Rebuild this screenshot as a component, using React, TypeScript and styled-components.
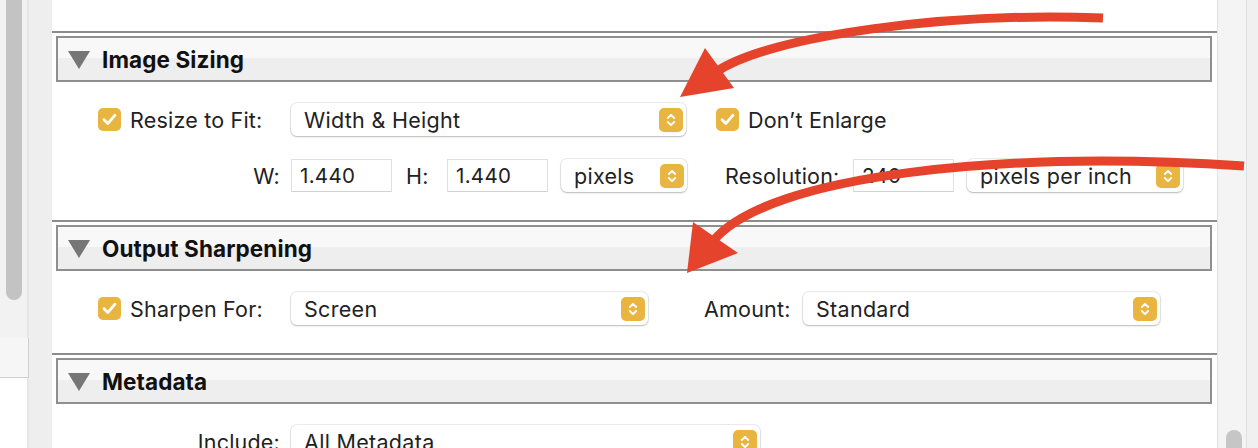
import styled, { createGlobalStyle } from "styled-components";

const GlobalStyle = createGlobalStyle`
  html, body {
    margin: 0;
    padding: 0;
    overflow: hidden;
    background: #ffffff;
  }
  body {
    font-family: Inter, "Noto Sans", "Liberation Sans", sans-serif;
    color: #222222;
    -webkit-font-smoothing: antialiased;
  }
`;

const ACCENT = "#e8b540";

const Window = styled.div`
  position: relative;
  display: flex;
  width: 1258px;
  height: 448px;
  overflow: hidden;
`;

const LeftRail = styled.div`
  display: flex;
  width: 52px;
  flex-shrink: 0;
`;

const RailTrack = styled.div`
  width: 27px;
  display: flex;
  flex-direction: column;
  background: #f2f2f2;
  border-right: 2px solid #e6e6e6;
`;

const RailThumb = styled.div`
  margin: 0 5px 0 6px;
  height: 300px;
  background: #c3c3c3;
  border-radius: 0 0 8px 8px;
`;

const RailSpacer = styled.div`
  height: 38px;
`;

const RailBox = styled.div`
  height: 39px;
  background: #f6f6f6;
  border-bottom: 1px solid #cfcfcf;
  margin-right: -2px;
  border-right: 1px solid #cfcfcf;
`;

const RailRest = styled.div`
  flex: 1;
  background: #ffffff;
`;

const RailGutter = styled.div`
  flex: 1;
  background: #eeeeee;
`;

const Panel = styled.div`
  flex: 1;
  display: flex;
  flex-direction: column;
  background: #ffffff;
  border-right: 1px solid #e2e2e2;
  overflow: hidden;
`;

const RightRail = styled.div`
  display: flex;
  width: 40px;
  flex-shrink: 0;
`;

const RightTrack = styled.div`
  width: 28px;
  display: flex;
  flex-direction: column;
  justify-content: flex-end;
  background: #f4f4f4;
  border-right: 1px solid #e2e2e2;
`;

const RightThumb = styled.div`
  margin: 0 4px 0 8px;
  height: 18px;
  background: #c6c6c6;
  border-radius: 8px 8px 0 0;
`;

const RightGutter = styled.div`
  flex: 1;
  background: #f0f0f0;
`;

const Separator = styled.div`
  height: 2px;
  background: #8c8c8c;
  flex-shrink: 0;
`;

const HeaderBox = styled.div`
  box-sizing: border-box;
  height: 46px;
  margin: 3px 5px 0 4px;
  border: 2px solid #8f8f8f;
  background: linear-gradient(#f8f8f8 0 48%, #eeeeee 48% 100%);
  display: flex;
  align-items: center;
  padding-left: 10px;
  flex-shrink: 0;
`;

const Disclosure = styled.span`
  width: 0;
  height: 0;
  border-left: 11px solid transparent;
  border-right: 11px solid transparent;
  border-top: 18px solid #767676;
  margin-top: 1px;
`;

const HeaderTitle = styled.span`
  margin-left: 12px;
  font-size: 22.5px;
  font-weight: 700;
  color: #111111;
  letter-spacing: 0.1px;
`;

const Body = styled.div<{ $lead?: boolean }>`
  display: flex;
  flex-direction: column;
  gap: 23px;
  padding: ${(p) => (p.$lead ? "0" : "21px")} 0 28px;
  margin-top: ${(p) => (p.$lead ? "-30px" : "0")};
  flex-shrink: 0;
`;

const Row = styled.div`
  display: flex;
  align-items: center;
  height: 33px;
`;

const LabelCell = styled.div<{ $check?: boolean }>`
  box-sizing: border-box;
  width: 239px;
  flex-shrink: 0;
  display: flex;
  align-items: center;
  justify-content: ${(p) => (p.$check ? "flex-start" : "flex-end")};
  padding: ${(p) => (p.$check ? "0 0 0 46px" : "0 11px 0 0")};
`;

const Label = styled.span`
  font-size: 21.5px;
  color: #222222;
  white-space: nowrap;
  letter-spacing: 0.2px;
`;

const InlineLabel = styled(Label)<{ $w: number; $ml: number }>`
  width: ${(p) => p.$w}px;
  margin-left: ${(p) => p.$ml}px;
  flex-shrink: 0;
`;

const CheckGroup = styled.div<{ $ml?: number }>`
  display: flex;
  align-items: center;
  gap: 9px;
  margin-left: ${(p) => p.$ml ?? 0}px;
`;

const Box = styled.span<{ $on: boolean }>`
  box-sizing: border-box;
  width: 23px;
  height: 23px;
  border-radius: 5px;
  display: inline-flex;
  align-items: center;
  justify-content: center;
  flex-shrink: 0;
  background: ${(p) => (p.$on ? ACCENT : "#ffffff")};
  border: ${(p) => (p.$on ? "none" : "1px solid #d6d6d6")};
`;

const Popup = styled.div<{ $w: number; $ml?: number }>`
  box-sizing: border-box;
  width: ${(p) => p.$w}px;
  margin-left: ${(p) => p.$ml ?? 0}px;
  height: 33px;
  flex-shrink: 0;
  display: flex;
  align-items: center;
  justify-content: space-between;
  padding: 0 3px 0 13px;
  background: #ffffff;
  border-radius: 6px;
  box-shadow: 0 0 0 1px rgba(0, 0, 0, 0.07), 0 1px 2px rgba(0, 0, 0, 0.22);
`;

const PopupText = styled.span`
  font-size: 21.5px;
  color: #222222;
  white-space: nowrap;
  letter-spacing: 0.3px;
`;

const Field = styled.div<{ $w: number; $ml?: number }>`
  box-sizing: border-box;
  width: ${(p) => p.$w}px;
  margin-left: ${(p) => p.$ml ?? 0}px;
  height: 33px;
  flex-shrink: 0;
  display: flex;
  align-items: center;
  padding-left: 8px;
  background: #ffffff;
  border: 1px solid #e0e0e0;
  border-bottom-color: #d2d2d2;
  font-size: 20.5px;
  color: #222222;
  letter-spacing: 0.3px;
`;

const Overlay = styled.svg`
  position: absolute;
  inset: 0;
  pointer-events: none;
`;

const Check = ({ on = true }: { on?: boolean }) => (
  <Box $on={on}>
    {on && (
      <svg width="23" height="23" viewBox="0 0 23 23">
        <path
          d="M6 11.8 L9.8 15.6 L17 7.2"
          fill="none"
          stroke="#ffffff"
          strokeWidth="2.8"
          strokeLinecap="round"
          strokeLinejoin="round"
        />
      </svg>
    )}
  </Box>
);

const Stepper = () => (
  <svg width="24" height="24" viewBox="0 0 24 24">
    <rect width="24" height="24" rx="5" fill={ACCENT} />
    <path
      d="M8.8 10 L12 6.8 L15.2 10 M8.8 14 L12 17.2 L15.2 14"
      fill="none"
      stroke="#ffffff"
      strokeWidth="1.9"
      strokeLinecap="round"
      strokeLinejoin="round"
    />
  </svg>
);

const Select = ({ value, w, ml }: { value: string; w: number; ml?: number }) => (
  <Popup $w={w} $ml={ml}>
    <PopupText>{value}</PopupText>
    <Stepper />
  </Popup>
);

const Section = ({ title, children }: { title: string; children: React.ReactNode }) => (
  <>
    <Separator />
    <HeaderBox>
      <Disclosure />
      <HeaderTitle>{title}</HeaderTitle>
    </HeaderBox>
    <Body>{children}</Body>
  </>
);

const RED = "#e5432b";

const Arrows = () => (
  <Overlay width="1258" height="448" viewBox="0 0 1258 448">
    <path
      d="M1103 18 C 950 12, 770 35, 716 72"
      fill="none"
      stroke={RED}
      strokeWidth="9"
    />
    <polygon points="680,97 705,48 734,88" fill={RED} />
    <path
      d="M1244 166 C 1000 150, 770 175, 714 240"
      fill="none"
      stroke={RED}
      strokeWidth="9"
    />
    <polygon points="687,273 693,222 738,253" fill={RED} />
  </Overlay>
);

export default function App() {
  return (
    <>
      <GlobalStyle />
      <Window>
        <LeftRail>
          <RailTrack>
            <RailThumb />
            <RailSpacer />
            <RailBox />
            <RailRest />
          </RailTrack>
          <RailGutter />
        </LeftRail>

        <Panel>
          <Body $lead>
            <Row>
              <LabelCell $check>
                <CheckGroup>
                  <Check on={false} />
                  <Label>Maximize Compatibility</Label>
                </CheckGroup>
              </LabelCell>
            </Row>
          </Body>

          <Section title="Image Sizing">
            <Row>
              <LabelCell $check>
                <CheckGroup>
                  <Check />
                  <Label>Resize to Fit:</Label>
                </CheckGroup>
              </LabelCell>
              <Select value="Width & Height" w={395} />
              <CheckGroup $ml={30}>
                <Check />
                <Label>Don’t Enlarge</Label>
              </CheckGroup>
            </Row>
            <Row>
              <LabelCell>
                <Label>W:</Label>
              </LabelCell>
              <Field $w={101}>1.440</Field>
              <InlineLabel $w={41} $ml={14}>
                H:
              </InlineLabel>
              <Field $w={101}>1.440</Field>
              <Select value="pixels" w={126} ml={13} />
              <InlineLabel $w={128} $ml={38}>
                Resolution:
              </InlineLabel>
              <Field $w={101}>240</Field>
              <Select value="pixels per inch" w={216} ml={13} />
            </Row>
          </Section>

          <Section title="Output Sharpening">
            <Row>
              <LabelCell $check>
                <CheckGroup>
                  <Check />
                  <Label>Sharpen For:</Label>
                </CheckGroup>
              </LabelCell>
              <Select value="Screen" w={357} />
              <InlineLabel $w={99} $ml={56}>
                Amount:
              </InlineLabel>
              <Select value="Standard" w={357} />
            </Row>
          </Section>

          <Section title="Metadata">
            <Row>
              <LabelCell>
                <Label>Include:</Label>
              </LabelCell>
              <Select value="All Metadata" w={469} />
            </Row>
          </Section>
        </Panel>

        <RightRail>
          <RightTrack>
            <RightThumb />
          </RightTrack>
          <RightGutter />
        </RightRail>

        <Arrows />
      </Window>
    </>
  );
}
